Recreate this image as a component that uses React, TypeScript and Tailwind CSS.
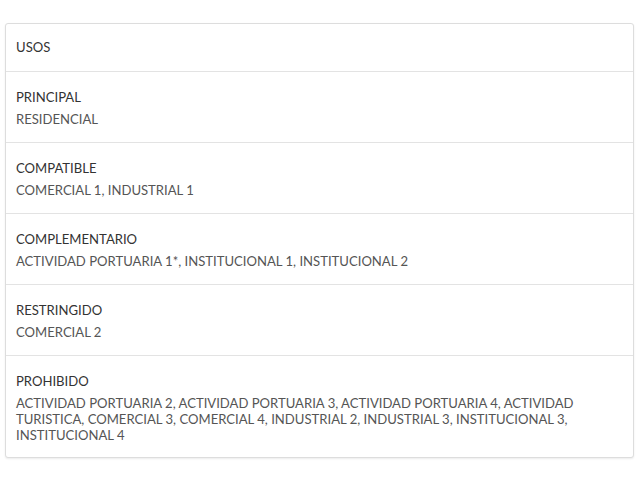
import React from "react";

const rows = [
  { label: "PRINCIPAL", value: "RESIDENCIAL" },
  { label: "COMPATIBLE", value: "COMERCIAL 1, INDUSTRIAL 1" },
  { label: "COMPLEMENTARIO", value: "ACTIVIDAD PORTUARIA 1*, INSTITUCIONAL 1, INSTITUCIONAL 2" },
  { label: "RESTRINGIDO", value: "COMERCIAL 2" },
  {
    label: "PROHIBIDO",
    value:
      "ACTIVIDAD PORTUARIA 2, ACTIVIDAD PORTUARIA 3, ACTIVIDAD PORTUARIA 4, ACTIVIDAD TURISTICA, COMERCIAL 3, COMERCIAL 4, INDUSTRIAL 2, INDUSTRIAL 3, INSTITUCIONAL 3, INSTITUCIONAL 4",
  },
];

const App = () => {
  return (
    <div className="w-[640px] h-[480px] bg-white pt-[23px] px-[5px] font-['Lato','Open_Sans',sans-serif]">
      <div className="w-[629px] border border-[#dddddd] rounded-[3px] shadow-[0_1px_2px_rgba(0,0,0,0.08)] bg-white">
        <div className="px-[10px] pt-[13px] pb-[14px] text-[13.1px] leading-[20px] text-[#333333] border-b border-[#e3e3e3]">
          USOS
        </div>
        {rows.map((r, i) => (
          <div
            key={r.label}
            className={
              i < rows.length - 1
                ? "px-[10px] pt-[15px] pb-[15px] border-b border-[#e3e3e3]"
                : "px-[10px] pt-[15px] pb-[14px]"
            }
          >
            <div className="text-[13.1px] leading-[20px] text-[#333333]">{r.label}</div>
            <div className="mt-[4px] text-[13.1px] leading-[16px] text-[#555555] pr-[40px]">{r.value}</div>
          </div>
        ))}
      </div>
    </div>
  );
};

export default App;
